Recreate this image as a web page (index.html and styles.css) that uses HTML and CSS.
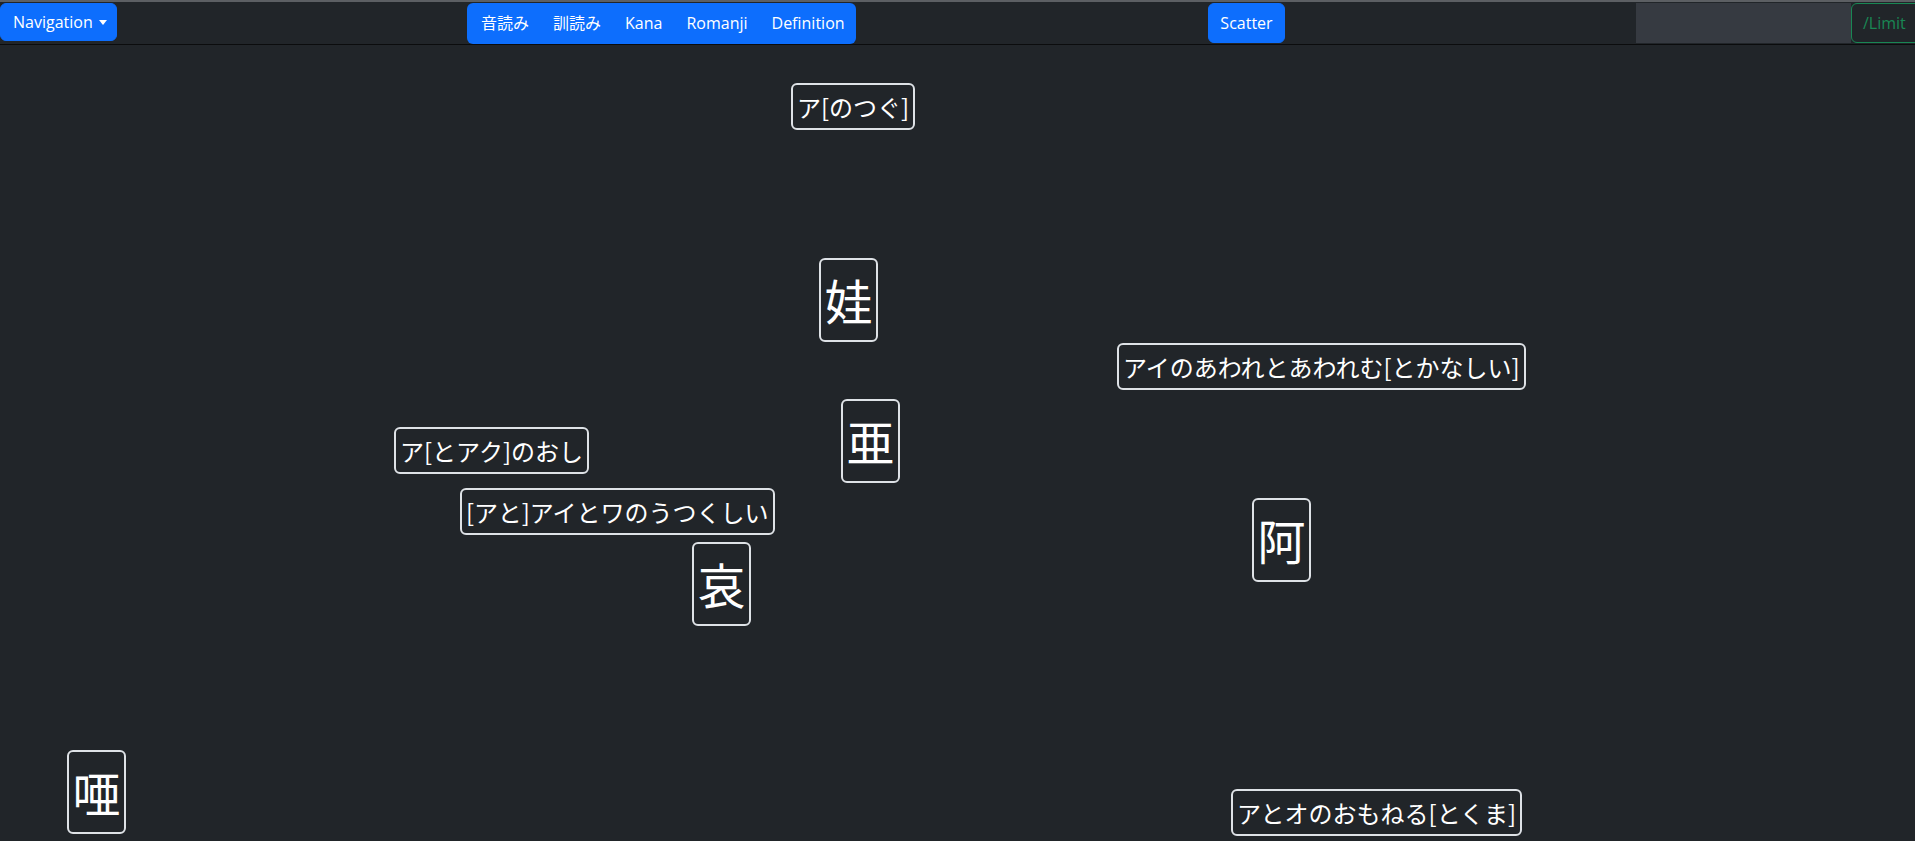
FILE: index.html
```html
<!DOCTYPE html>
<html lang="ja">
<head>
<meta charset="utf-8">
<title>Scatter</title>
<link rel="stylesheet" href="styles.css">
</head>
<body>
<nav class="navbar">
  <button class="btn btn-primary nav-toggle">Navigation<span class="caret"></span></button>
  <div class="btn-group">
    <span class="group-item">音読み</span>
    <span class="group-item">訓読み</span>
    <span class="group-item">Kana</span>
    <span class="group-item">Romanji</span>
    <span class="group-item">Definition</span>
  </div>
  <button class="btn btn-primary scatter-btn">Scatter</button>
  <div class="search-input"></div>
  <button class="btn btn-outline-success limit-btn">/Limit</button>
</nav>
<main class="canvas">
  <div class="card small" style="left:791px;top:38px">ア[のつぐ]</div>
  <div class="card big" style="left:819px;top:213px">娃</div>
  <div class="card small" style="left:1117px;top:298px">アイのあわれとあわれむ[とかなしい]</div>
  <div class="card big" style="left:841px;top:354px">亜</div>
  <div class="card small" style="left:394px;top:382px">ア[とアク]のおし</div>
  <div class="card small" style="left:460px;top:443px">[アと]アイとワのうつくしい</div>
  <div class="card big" style="left:1252px;top:453px">阿</div>
  <div class="card big" style="left:692px;top:497px">哀</div>
  <div class="card big" style="left:67px;top:705px">唖</div>
  <div class="card small" style="left:1231px;top:744px">アとオのおもねる[とくま]</div>
</main>
</body>
</html>
```
FILE: styles.css
```css
html, body {
  margin: 0;
  padding: 0;
  background: #212529;
  height: 100%;
  overflow: hidden;
}
body {
  font-family: "Open Sans", "Noto Sans CJK JP", sans-serif;
  color: #fff;
}
.navbar {
  display: flex;
  align-items: flex-start;
  box-sizing: border-box;
  height: 45px;
  border-top: 2px solid #5c5f63;
  border-bottom: 1px solid #0b0c0d;
  padding-top: 1px;
  background: #212529;
  white-space: nowrap;
  overflow: hidden;
}
.btn {
  font-family: "Open Sans", "Noto Sans CJK JP", sans-serif;
  font-size: 16px;
  border: 1px solid transparent;
  border-radius: 6px;
  color: #fff;
  padding: 0 12px;
  cursor: pointer;
  flex: none;
  box-sizing: border-box;
}
.btn-primary {
  background: #0d6efd;
  border-color: #0d6efd;
}
.nav-toggle {
  width: 117px;
  height: 38px;
  padding: 0 0 0 12px;
  text-align: left;
  display: flex;
  align-items: center;
}
.caret {
  display: inline-block;
  margin-left: 6px;
  border-top: 5px solid #fff;
  border-left: 4px solid transparent;
  border-right: 4px solid transparent;
  margin-top: 1px;
}
.btn-group {
  margin-left: 350px;
  width: 389px;
  height: 41px;
  box-sizing: border-box;
  background: #0d6efd;
  border-radius: 6px;
  display: flex;
  align-items: center;
  gap: 24px;
  padding-left: 14px;
  flex: none;
}
.group-item {
  font-size: 16px;
  line-height: 41px;
  font-family: "Open Sans", "Noto Sans CJK JP", sans-serif;
}
.scatter-btn {
  margin-left: 352px;
  width: 77px;
  height: 40px;
  padding: 0;
  text-align: center;
}
.search-input {
  margin-left: 351px;
  width: 215px;
  height: 40px;
  background: #363a41;
  flex: none;
}
.btn-outline-success {
  background: transparent;
  border-color: #198754;
  color: #198754;
}
.limit-btn {
  width: 120px;
  height: 40px;
  text-align: left;
  padding-left: 11px;
}
.canvas {
  position: relative;
  height: calc(100% - 45px);
}
.card {
  position: absolute;
  box-sizing: border-box;
  border: 2px solid #dee2e6;
  border-radius: 6px;
  font-family: "Noto Sans CJK JP", sans-serif;
  color: #fff;
  white-space: nowrap;
}
.card.small {
  font-size: 24px;
  padding: 2px 4px;
  height: 47px;
  line-height: 39px;
}
.card.big {
  font-size: 48px;
  width: 59px;
  height: 84px;
  line-height: 74px;
  padding: 2px 3px;
  text-align: center;
}
```
